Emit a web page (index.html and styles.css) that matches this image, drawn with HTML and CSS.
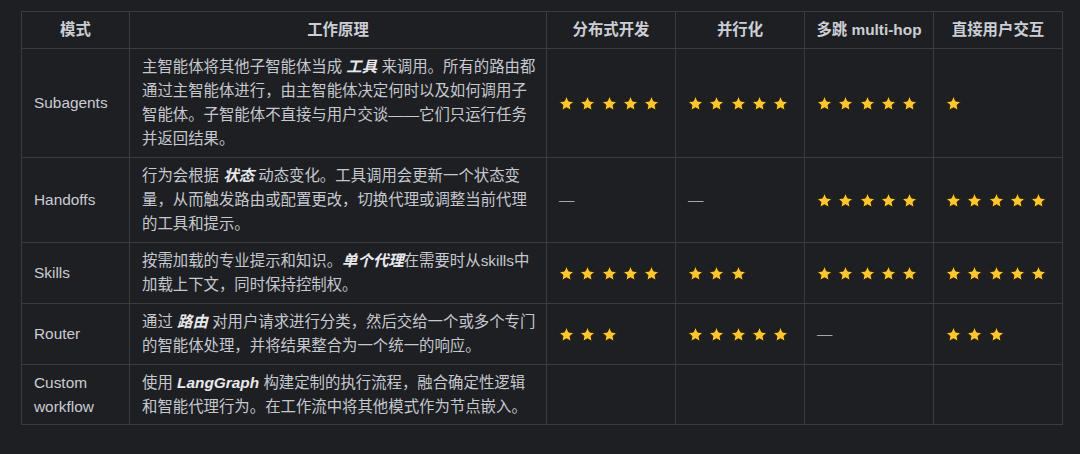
FILE: index.html
```html
<!DOCTYPE html>
<html lang="zh">
<head>
<meta charset="utf-8">
<title>模式对比</title>
<link rel="stylesheet" href="styles.css">
</head>
<body>
<svg class="defs" width="0" height="0" aria-hidden="true">
  <defs>
    <polygon id="s" points="12,1.8 15.06,8.59 22.46,9.4 16.95,14.41 18.47,21.7 12,18 5.53,21.7 7.05,14.41 1.54,9.4 8.94,8.59" fill="#fcc630" stroke="#2a1f03" stroke-width="1.4" stroke-linejoin="round"/>
  </defs>
</svg>
<div class="wrap">
<table class="modes">
  <colgroup>
    <col class="c-mode"><col class="c-desc"><col class="c-rate"><col class="c-rate"><col class="c-rate"><col class="c-rate">
  </colgroup>
  <thead>
    <tr><th>模式</th><th>工作原理</th><th>分布式开发</th><th>并行化</th><th>多跳 multi-hop</th><th>直接用户交互</th></tr>
  </thead>
  <tbody>
    <tr>
      <td class="name">Subagents</td>
      <td class="desc">主智能体将其他子智能体当成 <b>工具</b> 来调用。所有的路由都通过主智能体进行，由主智能体决定何时以及如何调用子智能体。子智能体不直接与用户交谈——它们只运行任务并返回结果。</td>
      <td><span class="stars"><svg viewBox="0 0 24 24"><use href="#s"/></svg><svg viewBox="0 0 24 24"><use href="#s"/></svg><svg viewBox="0 0 24 24"><use href="#s"/></svg><svg viewBox="0 0 24 24"><use href="#s"/></svg><svg viewBox="0 0 24 24"><use href="#s"/></svg></span></td>
      <td><span class="stars"><svg viewBox="0 0 24 24"><use href="#s"/></svg><svg viewBox="0 0 24 24"><use href="#s"/></svg><svg viewBox="0 0 24 24"><use href="#s"/></svg><svg viewBox="0 0 24 24"><use href="#s"/></svg><svg viewBox="0 0 24 24"><use href="#s"/></svg></span></td>
      <td><span class="stars"><svg viewBox="0 0 24 24"><use href="#s"/></svg><svg viewBox="0 0 24 24"><use href="#s"/></svg><svg viewBox="0 0 24 24"><use href="#s"/></svg><svg viewBox="0 0 24 24"><use href="#s"/></svg><svg viewBox="0 0 24 24"><use href="#s"/></svg></span></td>
      <td><span class="stars"><svg viewBox="0 0 24 24"><use href="#s"/></svg></span></td>
    </tr>
    <tr>
      <td class="name">Handoffs</td>
      <td class="desc">行为会根据 <b>状态</b> 动态变化。工具调用会更新一个状态变量，从而触发路由或配置更改，切换代理或调整当前代理的工具和提示。</td>
      <td class="none">—</td>
      <td class="none">—</td>
      <td><span class="stars"><svg viewBox="0 0 24 24"><use href="#s"/></svg><svg viewBox="0 0 24 24"><use href="#s"/></svg><svg viewBox="0 0 24 24"><use href="#s"/></svg><svg viewBox="0 0 24 24"><use href="#s"/></svg><svg viewBox="0 0 24 24"><use href="#s"/></svg></span></td>
      <td><span class="stars"><svg viewBox="0 0 24 24"><use href="#s"/></svg><svg viewBox="0 0 24 24"><use href="#s"/></svg><svg viewBox="0 0 24 24"><use href="#s"/></svg><svg viewBox="0 0 24 24"><use href="#s"/></svg><svg viewBox="0 0 24 24"><use href="#s"/></svg></span></td>
    </tr>
    <tr>
      <td class="name">Skills</td>
      <td class="desc">按需加载的专业提示和知识。<b>单个代理</b>在需要时从skills中加载上下文，同时保持控制权。</td>
      <td><span class="stars"><svg viewBox="0 0 24 24"><use href="#s"/></svg><svg viewBox="0 0 24 24"><use href="#s"/></svg><svg viewBox="0 0 24 24"><use href="#s"/></svg><svg viewBox="0 0 24 24"><use href="#s"/></svg><svg viewBox="0 0 24 24"><use href="#s"/></svg></span></td>
      <td><span class="stars"><svg viewBox="0 0 24 24"><use href="#s"/></svg><svg viewBox="0 0 24 24"><use href="#s"/></svg><svg viewBox="0 0 24 24"><use href="#s"/></svg></span></td>
      <td><span class="stars"><svg viewBox="0 0 24 24"><use href="#s"/></svg><svg viewBox="0 0 24 24"><use href="#s"/></svg><svg viewBox="0 0 24 24"><use href="#s"/></svg><svg viewBox="0 0 24 24"><use href="#s"/></svg><svg viewBox="0 0 24 24"><use href="#s"/></svg></span></td>
      <td><span class="stars"><svg viewBox="0 0 24 24"><use href="#s"/></svg><svg viewBox="0 0 24 24"><use href="#s"/></svg><svg viewBox="0 0 24 24"><use href="#s"/></svg><svg viewBox="0 0 24 24"><use href="#s"/></svg><svg viewBox="0 0 24 24"><use href="#s"/></svg></span></td>
    </tr>
    <tr>
      <td class="name">Router</td>
      <td class="desc">通过 <b>路由</b> 对用户请求进行分类，然后交给一个或多个专门的智能体处理，并将结果整合为一个统一的响应。</td>
      <td><span class="stars"><svg viewBox="0 0 24 24"><use href="#s"/></svg><svg viewBox="0 0 24 24"><use href="#s"/></svg><svg viewBox="0 0 24 24"><use href="#s"/></svg></span></td>
      <td><span class="stars"><svg viewBox="0 0 24 24"><use href="#s"/></svg><svg viewBox="0 0 24 24"><use href="#s"/></svg><svg viewBox="0 0 24 24"><use href="#s"/></svg><svg viewBox="0 0 24 24"><use href="#s"/></svg><svg viewBox="0 0 24 24"><use href="#s"/></svg></span></td>
      <td class="none">—</td>
      <td><span class="stars"><svg viewBox="0 0 24 24"><use href="#s"/></svg><svg viewBox="0 0 24 24"><use href="#s"/></svg><svg viewBox="0 0 24 24"><use href="#s"/></svg></span></td>
    </tr>
    <tr>
      <td class="name">Custom workflow</td>
      <td class="desc">使用 <b>LangGraph</b> 构建定制的执行流程，融合确定性逻辑和智能代理行为。在工作流中将其他模式作为节点嵌入。</td>
      <td></td><td></td><td></td><td></td>
    </tr>
  </tbody>
</table>
</div>
</body>
</html>
```
FILE: styles.css
```css
html, body {
  margin: 0;
  background: #1e1f23;
}
body {
  font-family: "Liberation Sans", "Noto Sans CJK SC", sans-serif;
  font-size: 15.4px;
  line-height: 24px;
  color: #c9ccd2;
}
.defs {
  position: absolute;
  width: 0;
  height: 0;
  overflow: hidden;
}
.wrap {
  padding: 11px 0 0 21px;
}
.modes {
  border-collapse: collapse;
  table-layout: fixed;
  width: 1042px;
}
.c-mode { width: 108px; }
.c-desc { width: 417px; }
.c-rate { width: 129px; }
.modes th,
.modes td {
  border: 1px solid #3a3b40;
  padding: 6px 10px 6px 12px;
  vertical-align: middle;
  text-align: left;
}
.modes th {
  text-align: center;
  font-weight: 700;
  color: #cbced4;
  padding: 6px 4px;
}
.modes tbody tr:last-child td {
  padding-bottom: 5px;
}
.modes td.desc {
  color: #c5c8ce;
}
.modes b {
  font-style: italic;
  font-weight: 700;
  color: #e8e9ec;
}
.modes td.none {
  color: #a3a6ad;
}
.stars {
  display: inline-flex;
  align-items: center;
  gap: 4.3px;
  vertical-align: middle;
  margin-left: -1px;
}
.stars svg {
  width: 17px;
  height: 17px;
  display: block;
  overflow: visible;
}
```
